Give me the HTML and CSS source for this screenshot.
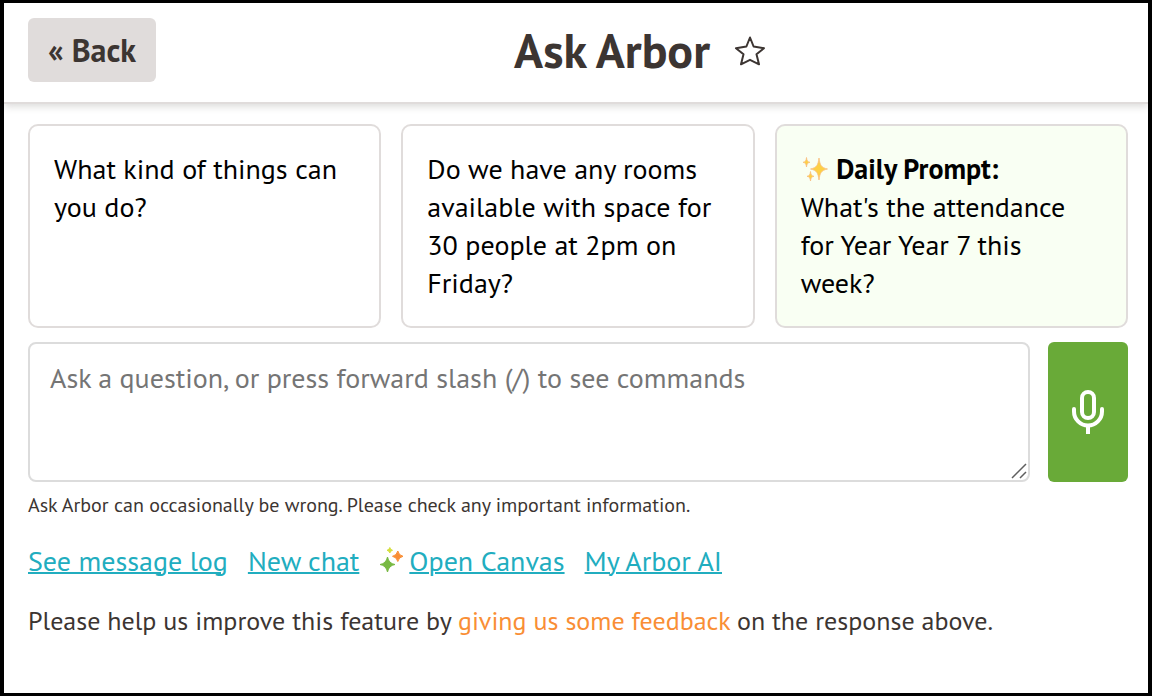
FILE: index.html
```html
<!DOCTYPE html>
<html lang="en">

<head>
    <meta charset="UTF-8">
    <meta name="viewport" content="width=device-width, initial-scale=1.0">
    <title>Ask Arbor</title>
    <link rel="stylesheet" href="styles.css">
</head>

<body>
    <header class="header">
        <button class="back" type="button">« Back</button>
        <div class="title">
            <h1>Ask Arbor</h1>
            <button class="star" type="button" aria-label="Favourite">
                <svg width="32" height="32" viewBox="0 0 32 32" fill="none" stroke="#3c3532" stroke-width="2" stroke-linejoin="round">
                    <path d="M16 3.500L19.600 12.500L30 14.200L22.500 20.300L25 30.300L16 25.800L7 30.300L9.500 20.300L2 14.200L12.400 12.500Z" />
                </svg>
            </button>
        </div>
    </header>

    <main class="content">
        <div class="prompts">
            <button class="prompt" type="button">
                <span>What kind of things can you do?</span>
            </button>
            <button class="prompt" type="button">
                <span>Do we have any rooms available with space for 30 people at 2pm on Friday?</span>
            </button>
            <button class="prompt daily" type="button">
                <span>
                    <svg class="sparkles" width="28" height="26" viewBox="-1 0 28 26" fill="#fdd045" stroke="#f9bd80" stroke-width="0.800">
                        <path d="M17 2C18 9 19 11.500 25.500 13C19 14.500 18 17 17 24C16 17 15 14.500 8.500 13C15 11.500 16 9 17 2Z" />
                        <path d="M4.500 1.500C5 5 5.300 5.500 8 6.300C5.300 7.100 5 7.600 4.500 11C4 7.600 3.700 7.100 1 6.300C3.700 5.500 4 5 4.500 1.500Z" />
                        <path d="M8.500 15.500C9 19 9.300 19.500 12 20.300C9.300 21.100 9 21.600 8.500 25C8 21.600 7.700 21.100 5 20.300C7.700 19.500 8 19 8.500 15.500Z" />
                    </svg>
                    <strong>Daily Prompt:</strong><br>
                    What's the attendance for Year Year 7 this week?
                </span>
            </button>
        </div>

        <form class="ask">
            <div class="field">
                <textarea class="question" aria-label="Question" placeholder="Ask a question, or press forward slash (/) to see commands"></textarea>
                <svg class="grip" width="16" height="16" viewBox="0 0 16 16" stroke="#5f5f5f" stroke-width="1.500">
                    <path d="M1 15L15 1M9 15L15 9" />
                </svg>
            </div>
            <button class="mic" type="button" aria-label="Speak">
                <svg width="34" height="46" viewBox="0 0 34 46" fill="none" stroke="#fff" stroke-width="4" stroke-linecap="round">
                    <rect x="11" y="3" width="12" height="26" rx="6" />
                    <path d="M3 20V22.500A14 14 0 0 0 31 22.500V20" />
                    <path stroke-linecap="butt" d="M17 36V45" />
                </svg>
            </button>
        </form>

        <p class="note">Ask Arbor can occasionally be wrong. Please check any important information.</p>

        <nav class="links">
            <a href="#">See message log</a>
            <a href="#">New chat</a>
            <span class="canvas">
                <svg width="26" height="32" viewBox="0 0 26 32">
                    <path fill="#78b943" stroke="#78b943" stroke-linejoin="round" d="M8.500 12Q9.800 18.500 16 19.500Q9.800 20.500 8.500 27Q7.200 20.500 1 19.500Q7.200 18.500 8.500 12Z" />
                    <path fill="#f98e35" stroke="#f98e35" stroke-linejoin="round" d="M18.800 6Q19.800 10.500 24 11.300Q19.800 12.100 18.800 16.500Q17.800 12.100 13.500 11.300Q17.800 10.500 18.800 6Z" />
                    <path fill="#d5df3d" stroke="#d5df3d" stroke-linejoin="round" d="M10.800 2.500Q11.200 4.800 13.500 5.300Q11.200 5.800 10.800 8Q10.400 5.800 8 5.300Q10.400 4.800 10.800 2.500Z" />
                </svg>
                <a href="#">Open Canvas</a>
            </span>
            <a href="#">My Arbor AI</a>
        </nav>

        <p class="feedback">Please help us improve this feature by <a href="#">giving us some feedback</a> on the response above.</p>
    </main>
</body>

</html>
```
FILE: styles.css
```css
* {
    margin: 0;
    padding: 0;
    box-sizing: border-box;
}

body {
    min-height: 100vh;
    border: solid #000;
    border-width: 3px 4px;
    background-color: #fff;
    color: #3c3532;
    font-family: "PT Sans", "Noto Sans", sans-serif;
}

button,
textarea {
    font-family: inherit;
}

button {
    border: none;
    background: none;
    cursor: pointer;
}

.header {
    display: flex;
    align-items: center;
    padding: 15px 24px 20px;
    border-bottom: 2px solid #e0dcdb;
    box-shadow: 0 2px 8px rgba(60, 53, 50, 0.2);
}

.back {
    height: 64px;
    padding: 0 20px;
    border-radius: 6px;
    background-color: #e0dcdb;
    color: #3c3532;
    font-size: 32px;
    font-weight: bold;
}

.title {
    display: flex;
    flex: 1;
    align-items: center;
    justify-content: center;
    gap: 24px;
}

.title h1 {
    font-size: 48px;
    line-height: 64px;
}

.star {
    display: flex;
}

.content {
    padding: 20px 20px 20px 24px;
}

.prompts {
    display: grid;
    grid-template-columns: repeat(3, 1fr);
    gap: 20px;
}

.prompt {
    display: flex;
    align-items: flex-start;
    padding: 24px;
    border: 2px solid #e0dcdb;
    border-radius: 10px;
    color: #000;
    font-size: 28px;
    line-height: 38px;
    text-align: left;
}

.daily {
    background-color: #f9fff3;
}

.sparkles {
    vertical-align: -3px;
}

.ask {
    display: flex;
    gap: 18px;
    margin-top: 14px;
}

.field {
    position: relative;
    flex: 1;
}

.question {
    display: block;
    width: 100%;
    height: 140px;
    padding: 15px 20px;
    border: 2px solid #dcdcdc;
    border-radius: 8px;
    font-size: 28px;
    line-height: 38px;
    resize: none;
}

.question::placeholder {
    color: #757575;
}

.grip {
    position: absolute;
    right: 3px;
    bottom: 3px;
    pointer-events: none;
}

.mic {
    display: flex;
    align-items: center;
    justify-content: center;
    width: 80px;
    border-radius: 6px;
    background-color: #69aa38;
}

.note {
    margin-top: 8px;
    font-size: 20px;
    line-height: 30px;
}

.links {
    display: flex;
    gap: 20px;
    margin-top: 21px;
    font-size: 28px;
    line-height: 40px;
}

.links a {
    color: #21adbf;
    text-decoration-thickness: 2px;
}

.canvas {
    display: flex;
    align-items: center;
    gap: 4px;
}

.feedback {
    margin-top: 20px;
    font-size: 26px;
    line-height: 40px;
}

.feedback a {
    color: #f98e35;
    text-decoration: none;
}
```
